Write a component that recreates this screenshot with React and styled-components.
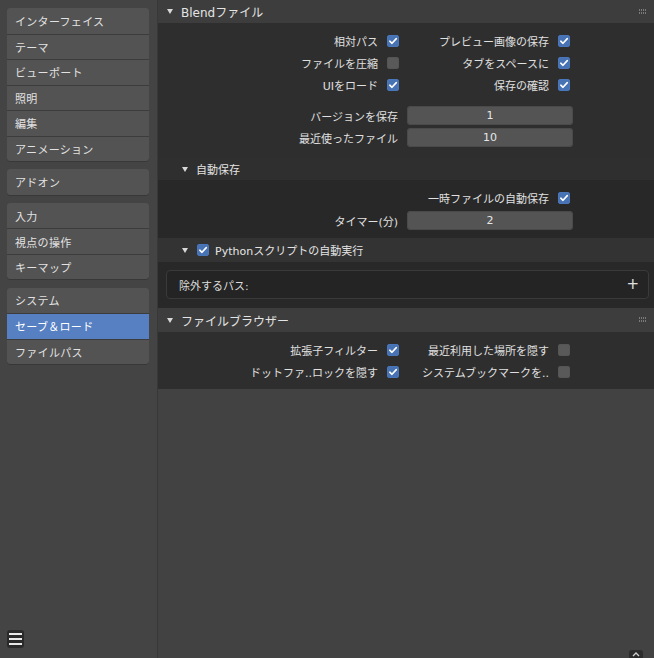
import React from 'react'
import styled, { createGlobalStyle } from 'styled-components'

const GlobalStyle = createGlobalStyle`
  html, body {
    margin: 0;
    padding: 0;
    background: #424242;
  }
  body {
    font-family: "DejaVu Sans", "Noto Sans CJK JP", sans-serif;
    font-size: 11px;
    color: #e0e0e0;
  }
`

const Screen = styled.div`
  display: flex;
  width: 654px;
  height: 658px;
  overflow: hidden;
`

const Sidebar = styled.div`
  width: 157px;
  flex-shrink: 0;
  display: flex;
  flex-direction: column;
  padding: 8px 0 0 7px;
  box-sizing: border-box;
  background: #444444;
`

const NavGroup = styled.div`
  width: 142px;
  display: flex;
  flex-direction: column;
  border-radius: 4px;
  overflow: hidden;
  background: #545454;
  box-shadow: 0 1px 0 #383838;
  margin-bottom: 8.2px;
`

const NavItem = styled.div`
  height: 25.5px;
  display: flex;
  align-items: center;
  padding-left: 8px;
  box-sizing: border-box;
  color: ${p => (p.$active ? '#ffffff' : '#e2e2e2')};
  background: ${p => (p.$active ? '#5680c2' : '#535353')};
  border-top: ${p => (p.$first ? 'none' : '1px solid #3c3c3c')};
  letter-spacing: 0.3px;
`

const MenuButton = styled.div`
  margin-top: auto;
  margin-bottom: 10px;
  width: 17px;
  height: 18px;
  border-radius: 3px;
  background: #2a2a2a;
  display: flex;
  flex-direction: column;
  justify-content: center;
  align-items: center;
  gap: 3px;

  & span {
    display: block;
    width: 13px;
    height: 2px;
    background: #e8e8e8;
  }
`

const Main = styled.div`
  flex: 1;
  position: relative;
  border-left: 1px solid #383838;
  background: #424242;
  display: flex;
  flex-direction: column;
`

const PanelHeader = styled.div`
  height: ${p => p.$h || 23}px;
  display: flex;
  align-items: center;
  padding-left: ${p => (p.$sub ? 24 : 9)}px;
  background: ${p => p.$bg || '#3d3d3d'};
  font-size: ${p => (p.$sub ? 11 : 12)}px;
  color: #e4e4e4;
  position: relative;
`

const Arrow = styled.span`
  width: 0;
  height: 0;
  border-left: 3px solid transparent;
  border-right: 3px solid transparent;
  border-top: 5px solid #d8d8d8;
  margin-right: ${p => p.$gap || 8}px;
`

const Grip = styled.svg`
  position: absolute;
  right: 7px;
  top: 50%;
  margin-top: -3px;
`

const PanelBody = styled.div`
  background: ${p => p.$bg || '#2e2e2e'};
  padding: ${p => p.$pad || '7px 0 0 0'};
  display: flex;
  flex-direction: column;
`

const CheckGrid = styled.div`
  display: grid;
  grid-template-columns: 241px 171px;
  grid-auto-rows: 22px;
`

const CheckItem = styled.div`
  display: flex;
  align-items: center;
  justify-content: flex-end;
  gap: 9px;
  white-space: nowrap;
`

const Box = styled.span`
  width: 12px;
  height: 12px;
  border-radius: 3px;
  flex-shrink: 0;
  background: ${p => (p.$on ? '#4772b3' : '#595959')};
  box-shadow: inset 0 0 0 1px ${p => (p.$on ? '#4a77bb' : '#555555')};
  display: flex;
  align-items: center;
  justify-content: center;
`

const FieldRow = styled.div`
  display: grid;
  grid-template-columns: 240px 166px;
  column-gap: 9px;
  align-items: center;
  height: 19px;
  margin-top: ${p => p.$mt || 0}px;
`

const FieldLabel = styled.span`
  text-align: right;
  white-space: nowrap;
`

const NumField = styled.div`
  height: 19px;
  border-radius: 4px;
  background: #545454;
  box-shadow: inset 0 0 0 1px #4a4a4a;
  display: flex;
  align-items: center;
  justify-content: center;
  color: #e6e6e6;
`

const ExcludeBox = styled.div`
  margin: 0 5px 0 8px;
  height: 29px;
  border-radius: 4px;
  background: #242424;
  border: 1px solid #3a3a3a;
  box-sizing: border-box;
  display: flex;
  align-items: center;
  justify-content: space-between;
  padding: 0 9px 0 12px;
  color: #dcdcdc;
  font-size: 11px;
`

const Plus = styled.span`
  font-size: 15px;
  color: #e0e0e0;
  line-height: 1;
`

const ScrollTab = styled.div`
  position: absolute;
  right: 11px;
  bottom: 0;
  width: 14px;
  height: 8px;
  border-radius: 3px 3px 0 0;
  background: #2c2c2c;
  display: flex;
  justify-content: center;
  align-items: center;
`

const Check = ({ on }) => (
  <Box $on={on}>
    {on && (
      <svg width="10" height="10" viewBox="0 0 10 10">
        <path d="M1.8 5.2 L4 7.3 L8.3 2.6" fill="none" stroke="#fff" strokeWidth="1.6" strokeLinecap="round" strokeLinejoin="round" />
      </svg>
    )}
  </Box>
)

const Toggle = ({ label, on }) => (
  <CheckItem>
    {label && <span>{label}</span>}
    {label && <Check on={on} />}
  </CheckItem>
)

const GripIcon = () => (
  <Grip width="8" height="6" viewBox="0 0 8 6">
    {[0, 2, 4, 6].map(x => [0, 3].map(y => (
      <rect key={x + '-' + y} x={x} y={y} width="1" height="2" fill="#7a7a7a" />
    )))}
  </Grip>
)

const nav = [
  ['インターフェイス', 'テーマ', 'ビューポート', '照明', '編集', 'アニメーション'],
  ['アドオン'],
  ['入力', '視点の操作', 'キーマップ'],
  ['システム', 'セーブ＆ロード', 'ファイルパス'],
]

export default function App() {
  return (
    <Screen>
      <GlobalStyle />
      <Sidebar>
        {nav.map((group, gi) => (
          <NavGroup key={gi}>
            {group.map((item, i) => (
              <NavItem key={item} $first={i === 0} $active={item === 'セーブ＆ロード'}>{item}</NavItem>
            ))}
          </NavGroup>
        ))}
        <MenuButton><span /><span /><span /></MenuButton>
      </Sidebar>

      <Main>
        <PanelHeader>
          <Arrow />Blendファイル
          <GripIcon />
        </PanelHeader>
        <PanelBody $pad="7px 0 11px 0">
          <CheckGrid>
            <Toggle label="相対パス" on />
            <Toggle label="プレビュー画像の保存" on />
            <Toggle label="ファイルを圧縮" />
            <Toggle label="タブをスペースに" on />
            <Toggle label="UIをロード" on />
            <Toggle label="保存の確認" on />
          </CheckGrid>
          <FieldRow $mt={10}>
            <FieldLabel>バージョンを保存</FieldLabel>
            <NumField>1</NumField>
          </FieldRow>
          <FieldRow $mt={3}>
            <FieldLabel>最近使ったファイル</FieldLabel>
            <NumField>10</NumField>
          </FieldRow>
        </PanelBody>

        <PanelHeader $sub $h={22} $bg="#2f2f2f">
          <Arrow />自動保存
        </PanelHeader>
        <PanelBody $bg="#282828" $pad="7px 0 8px 0">
          <CheckGrid>
            <Toggle />
            <Toggle label="一時ファイルの自動保存" on />
          </CheckGrid>
          <FieldRow $mt={2}>
            <FieldLabel>タイマー(分)</FieldLabel>
            <NumField>2</NumField>
          </FieldRow>
        </PanelBody>

        <PanelHeader $sub $h={24} $bg="#333333">
          <Arrow $gap={9} />
          <Check on />
          <span style={{ marginLeft: 6 }}>Pythonスクリプトの自動実行</span>
        </PanelHeader>
        <PanelBody $bg="#282828" $pad="8px 0 9px 0">
          <ExcludeBox>
            <span>除外するパス:</span>
            <Plus>+</Plus>
          </ExcludeBox>
        </PanelBody>

        <PanelHeader $h={24}>
          <Arrow />ファイルブラウザー
          <GripIcon />
        </PanelHeader>
        <PanelBody $pad="7px 0 6px 0">
          <CheckGrid>
            <Toggle label="拡張子フィルター" on />
            <Toggle label="最近利用した場所を隠す" />
            <Toggle label="ドットファ..ロックを隠す" on />
            <Toggle label="システムブックマークを.." />
          </CheckGrid>
        </PanelBody>

        <ScrollTab>
          <svg width="8" height="5" viewBox="0 0 8 5">
            <path d="M1 4 L4 1 L7 4" fill="none" stroke="#cfcfcf" strokeWidth="1.3" />
          </svg>
        </ScrollTab>
      </Main>
    </Screen>
  )
}
